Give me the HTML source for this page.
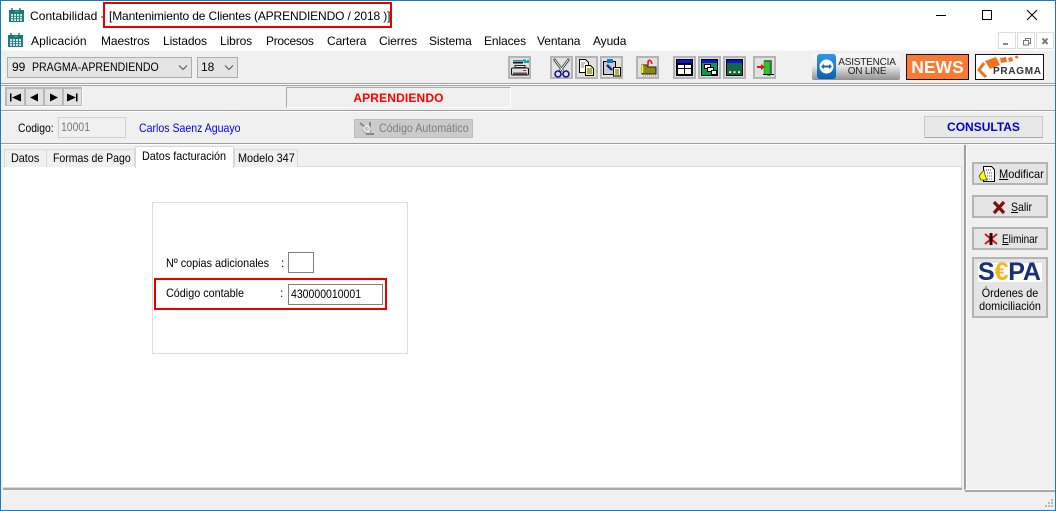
<!DOCTYPE html>
<html><head><meta charset="utf-8">
<style>
html,body{margin:0;padding:0;width:1056px;height:511px;overflow:hidden;background:#f0f0f0;}
body{position:relative;font-family:"Liberation Sans",sans-serif;font-size:12px;color:#000;}
.a,.t{position:absolute;}
.t{white-space:nowrap;line-height:14px;transform-origin:0 50%;}
.m{letter-spacing:-.1px;top:34px;}
.b{position:absolute;box-sizing:border-box;background:#e1e1e1;border:2px solid #b4b4b4;}
svg{position:absolute;overflow:visible;}
</style></head><body>
<!-- window -->
<div class="a" style="left:0;top:0;width:1056px;height:50px;background:#fff"></div>
<div class="a" style="left:0;top:0;width:1056px;height:1px;background:#1b7ac0"></div>
<div class="a" style="left:0;top:0;width:1px;height:511px;background:#1b7ac0"></div>
<div class="a" style="right:0;top:0;width:1px;height:511px;background:#1b7ac0"></div>
<div class="a" style="left:0;top:510px;width:1056px;height:1px;background:#1b7ac0"></div>

<!-- title -->
<svg style="left:9px;top:7px" width="16" height="16" viewBox="0 0 16 16"><rect x="0" y="4" width="15" height="11" fill="#1f7f80"/><rect x="0" y="3" width="15" height="3" fill="#178"/><path d="M3 1v4M11 1v4" stroke="#555" stroke-width="1.4"/><rect x="6" y="4" width="4" height="1" fill="#3c3"/><path d="M2 8h11M2 10.500h11M2 13h11" stroke="#fff" stroke-width="1.400" stroke-dasharray="2 1"/></svg>
<div class="t" style="left:30px;top:9px;letter-spacing:.05px">Contabilidad -</div>
<div class="t" style="left:109px;top:9px;letter-spacing:-.14px">[Mantenimiento de Clientes (APRENDIENDO / 2018 )]</div>
<div class="a" style="left:103px;top:2px;width:289px;height:26px;box-sizing:border-box;border:2px solid #e80000"></div>
<svg style="left:930px;top:5px" width="120" height="20"><path d="M6 10.500h10" stroke="#000"/><rect x="52.500" y="5.500" width="9" height="9" fill="none" stroke="#000"/><path d="M97 5l10 10M107 5l-10 10" stroke="#000" fill="none"/></svg>

<!-- menu -->
<svg style="left:8px;top:32px" width="16" height="16" viewBox="0 0 16 16"><rect x="0" y="4" width="15" height="11" fill="#1f7f80"/><rect x="0" y="3" width="15" height="3" fill="#178"/><path d="M3 1v4M11 1v4" stroke="#555" stroke-width="1.400"/><rect x="6" y="4" width="4" height="1" fill="#3c3"/><path d="M2 8h11M2 10.500h11M2 13h11" stroke="#fff" stroke-width="1.400" stroke-dasharray="2 1"/></svg>
<div class="t m" style="left:31px;letter-spacing:.1px">Aplicación</div>
<div class="t m" style="left:101px">Maestros</div>
<div class="t m" style="left:163px">Listados</div>
<div class="t m" style="left:220px">Libros</div>
<div class="t m" style="left:266px;letter-spacing:-.3px">Procesos</div>
<div class="t m" style="left:327px">Cartera</div>
<div class="t m" style="left:379px">Cierres</div>
<div class="t m" style="left:429px">Sistema</div>
<div class="t m" style="left:484px">Enlaces</div>
<div class="t m" style="left:537px">Ventana</div>
<div class="t m" style="left:593px">Ayuda</div>
<div class="a" style="left:998px;top:32px;width:18px;height:17px;box-sizing:border-box;border:1px solid #ddd;background:#fff"></div>
<div class="a" style="left:1017px;top:32px;width:18px;height:17px;box-sizing:border-box;border:1px solid #ddd;background:#fff"></div>
<div class="a" style="left:1036px;top:32px;width:18px;height:17px;box-sizing:border-box;border:1px solid #ddd;background:#fff"></div>
<svg style="left:998px;top:32px" width="56" height="17"><path d="M5 12h5" stroke="#888" stroke-width="2"/><path d="M27.500 8V6.500h5v5H31M25.500 8.500h5v4.500h-5z" fill="none" stroke="#777"/><path d="M44.500 6.500l5 5.500M49.500 6.500l-5 5.500" stroke="#777" stroke-width="2"/></svg>

<!-- toolbar bg -->
<div class="a" style="left:1px;top:50px;width:1054px;height:1px;background:#f7f7f7"></div>
<div class="a" style="left:7px;top:57px;width:185px;height:21px;box-sizing:border-box;background:#e4e4e4;border:1px solid #adadad"></div>
<div class="t" style="left:12px;top:60px">99</div>
<div class="t" style="left:32px;top:60px;transform:scaleX(.88)">PRAGMA-APRENDIENDO</div>
<div class="a" style="left:197px;top:57px;width:41px;height:21px;box-sizing:border-box;background:#e4e4e4;border:1px solid #adadad"></div>
<div class="t" style="left:201px;top:60px">18</div>
<svg style="left:178px;top:64px" width="60" height="8"><path d="M1 1.500l4 4 4-4M47 1.500l4 4 4-4" fill="none" stroke="#555"/></svg>

<!-- toolbar buttons -->
<div class="b" style="left:508px;top:56px;width:23px;height:23px"></div>
<svg style="left:510px;top:58px" width="20" height="20"><path d="M3 4h10" stroke="#111" stroke-width="3"/><path d="M3 3.500h10" stroke="#2cd" stroke-width="1"/><path d="M13 2.500h2v1.500h3v-2" stroke="#0aa" stroke-width="2" fill="none"/><rect x="5" y="7.500" width="10" height="2" fill="#eee" stroke="#222"/><rect x="1.500" y="10" width="17" height="7" rx="1" fill="#ddd" stroke="#111"/><path d="M3 15.500h14" stroke="#555" stroke-width="2"/><path d="M13 12.500h3" stroke="#d22"/></svg>
<div class="b" style="left:550px;top:56px;width:23px;height:23px"></div>
<svg style="left:551px;top:57px" width="21" height="21"><path d="M3 2l9 12M18 2L9 14" stroke="#222" stroke-width="2.400" fill="none"/><path d="M3.500 2.500l8.500 11.500M17.500 2.500L9 14" stroke="#fff" stroke-width="1"/><circle cx="7" cy="17" r="3" fill="none" stroke="#119" stroke-width="1.600"/><circle cx="15" cy="17" r="3" fill="none" stroke="#119" stroke-width="1.600"/></svg>
<div class="b" style="left:575px;top:56px;width:23px;height:23px"></div>
<svg style="left:577px;top:58px" width="19" height="19"><path d="M2.500 1.500h6l3 3v10h-9z" fill="#fff" stroke="#000"/><path d="M4 5h4M4 7h3M4 9h3" stroke="#888"/><path d="M8.500 7.500h5l3 3v7h-8z" fill="#ffffa0" stroke="#000"/><path d="M10 11h5M10 13h5M10 15h5" stroke="#555"/></svg>
<div class="b" style="left:600px;top:56px;width:23px;height:23px"></div>
<svg style="left:602px;top:58px" width="19" height="19"><path d="M1.500 3.500h12v13h-12z" fill="#ccc" stroke="#000"/><rect x="5" y="1" width="6" height="4" fill="#17c"/><path d="M5 7l5 5" stroke="#039" stroke-width="2.500"/><path d="M11.500 9.500h7v8.500h-7z" fill="#ffffa0" stroke="#000"/><path d="M13 12h4M13 14h4M13 16h4" stroke="#555"/></svg>
<div class="b" style="left:636px;top:56px;width:23px;height:23px"></div>
<svg style="left:638px;top:58px" width="19" height="19"><path d="M4 7h5l1 2h8v7H4z" fill="#8a8a10" stroke="#222"/><path d="M4.500 7v8" stroke="#ff0" stroke-width="1.500"/><path d="M10 8V4q1-3 3-1l1 3" fill="none" stroke="#e11" stroke-width="1.500"/><path d="M9 3l2-1v3z" fill="#e11"/><path d="M5 18h13" stroke="#999" stroke-dasharray="1 1"/></svg>
<div class="b" style="left:673px;top:56px;width:23px;height:23px"></div>
<svg style="left:675px;top:58px" width="19" height="19"><rect x="1" y="1" width="17" height="17" fill="#000"/><rect x="2" y="2" width="15" height="3" fill="#1111dd"/><path d="M3 7h6v3H3zM10 7h6v3h-6zM3 11h6v5H3zM10 11h6v5h-6z" fill="#fff"/></svg>
<div class="b" style="left:698px;top:56px;width:23px;height:23px"></div>
<svg style="left:700px;top:58px" width="19" height="19"><rect x="1" y="1" width="17" height="17" fill="#000"/><rect x="2" y="2" width="15" height="3" fill="#1111dd"/><rect x="2" y="5" width="15" height="12" fill="#109a50"/><rect x="4.500" y="6.500" width="6" height="4" fill="#fff" stroke="#000"/><rect x="7.500" y="9.500" width="6" height="4" fill="#fff" stroke="#000"/><rect x="11.500" y="12.500" width="5" height="4" fill="#fff" stroke="#000"/></svg>
<div class="b" style="left:723px;top:56px;width:23px;height:23px"></div>
<svg style="left:725px;top:58px" width="19" height="19"><rect x="1" y="1" width="17" height="17" fill="#000"/><rect x="2" y="2" width="15" height="3" fill="#1111dd"/><rect x="2" y="5" width="15" height="12" fill="#0d6b3c"/><path d="M4 14h2M8.500 14h2M13 14h2" stroke="#fff" stroke-width="2"/><path d="M4 13h1M9 13h1M13 13h1" stroke="#e33"/></svg>
<div class="b" style="left:753px;top:56px;width:23px;height:23px"></div>
<svg style="left:755px;top:58px" width="19" height="19"><path d="M9 2h8v14H9z" fill="#666"/><path d="M9 3l6 1v14l-6-2z" fill="#2c2" stroke="#161" stroke-width=".5"/><path d="M2 9h6" stroke="#e11" stroke-width="2"/><path d="M6 6l4 3-4 3z" fill="#e11"/><path d="M8 16.500h11" stroke="#000"/></svg>

<!-- teamviewer -->
<div class="a" style="left:812px;top:54px;width:88px;height:26px;border-radius:2px;background:linear-gradient(#f8f8f8 0,#ececec 45%,#8f8f8f 100%)"></div>
<div class="a" style="left:817px;top:54px;width:19px;height:25px;border-radius:3px;background:linear-gradient(#2a9ae8,#0c5fb0)"></div>
<svg style="left:818px;top:58px" width="17" height="17"><circle cx="8.500" cy="8.500" r="7" fill="#fff"/><path d="M3 8.500l3-2.500v1.500h5V6l3 2.500-3 2.500V9.500H6V11z" fill="#0e66b8"/></svg>
<div class="t" style="left:838px;top:58px;width:58px;text-align:center;font-size:10px;line-height:9px;letter-spacing:-.2px;color:#222">ASISTENCIA<br>ON LINE</div>
<!-- news -->
<div class="a" style="left:906px;top:54px;width:63px;height:26px;box-sizing:border-box;background:#fb7a30;border:1px solid #111"></div>
<div class="t" style="left:906px;top:59px;width:63px;text-align:center;font-size:17.500px;line-height:17px;font-weight:bold;color:#fff">NEWS</div>
<!-- pragma -->
<div class="a" style="left:975px;top:54px;width:69px;height:26px;box-sizing:border-box;background:#fff;border:1px solid #111"></div>
<svg style="left:976px;top:55px" width="44" height="24"><path d="M9 6l11-4 4 8-10 4zM24 3l6-1 1 5-6 1zM32 3l4-1 1 4-4 1zM39 1l3-.5.500 2.500-3 .5z" fill="#f37021"/><path d="M8 8L3 15l7 7" fill="none" stroke="#f37021" stroke-width="3"/></svg>
<div class="t" style="left:993px;top:67px;font-size:10px;line-height:10px;font-weight:bold;letter-spacing:.7px;color:#333">PRAGMA</div>

<!-- separator -->
<div class="a" style="left:1px;top:83px;width:1054px;height:1px;background:#a0a0a0"></div>
<div class="a" style="left:1px;top:84px;width:1054px;height:1px;background:#fff"></div>
<div class="a" style="left:1px;top:85px;width:1054px;height:1px;background:#a0a0a0"></div>

<!-- nav buttons -->
<div class="a" style="left:5px;top:87px;width:78px;height:20px;box-sizing:border-box;background:#b8b8b8;border-right:1px solid #fff;border-bottom:1px solid #fff"></div>
<div class="a" style="left:7px;top:89px;width:17px;height:16px;background:#e1e1e1"></div>
<div class="a" style="left:26px;top:89px;width:17px;height:16px;background:#e1e1e1"></div>
<div class="a" style="left:45px;top:89px;width:17px;height:16px;background:#e1e1e1"></div>
<div class="a" style="left:64px;top:89px;width:17px;height:16px;background:#e1e1e1"></div>
<svg style="left:0;top:90px" width="90" height="14"><path d="M10 3.500h1.500v8H10zM21 3.500v8l-9-4zM38 3.500v8l-8-4zM50 3.500v8l8-4zM67 3.500v8l9-4zM76 3.500h1.500v8H76z" fill="#000"/></svg>

<!-- aprendiendo box -->
<div class="a" style="left:286px;top:87px;width:225px;height:21px;box-sizing:border-box;border:1px solid #a8a8a8;border-right-color:#fff;border-bottom-color:#fff"></div>
<div class="t" style="left:286px;top:91px;width:225px;text-align:center;font-weight:bold;letter-spacing:.15px;color:#ff0000">APRENDIENDO</div>

<div class="a" style="left:1px;top:110px;width:1054px;height:1px;background:#a0a0a0"></div>
<div class="a" style="left:1px;top:111px;width:1054px;height:1px;background:#fff"></div>

<!-- codigo row -->
<div class="t" style="left:18px;top:121px;transform:scaleX(.86)">Codigo:</div>
<div class="a" style="left:58px;top:117px;width:68px;height:21px;box-sizing:border-box;background:#f0f0f0;border:1px solid #d0d0d0"></div>
<div class="t" style="left:61px;top:120px;color:#777;transform:scaleX(.87)">10001</div>
<div class="t" style="left:139px;top:121px;color:#0000f0;transform:scaleX(.88)">Carlos Saenz Aguayo</div>
<div class="a" style="left:354px;top:119px;width:119px;height:19px;box-sizing:border-box;background:#cbcbcb;border:1px solid #bcbcbc"></div>
<svg style="left:358px;top:120px" width="18" height="17"><path d="M2 3l6 5M12 2v10M5 9l4 5h7" stroke="#888" stroke-width="2" fill="none"/><circle cx="9" cy="9" r="3" fill="none" stroke="#eee" stroke-width="1.500"/></svg>
<div class="t" style="left:379px;top:121px;color:#7d7d7d;transform:scaleX(.89)">Código Automático</div>
<div class="a" style="left:924px;top:116px;width:119px;height:22px;box-sizing:border-box;background:#e8e8e8;border:1px solid #c8c8c8;border-bottom-color:#a8a8a8"></div>
<div class="t" style="left:924px;top:120px;width:119px;text-align:center;font-weight:bold;color:#0000d0">CONSULTAS</div>

<div class="a" style="left:1px;top:143px;width:1054px;height:1px;background:#a0a0a0"></div>
<div class="a" style="left:1px;top:144px;width:1054px;height:1px;background:#fff"></div>

<!-- main tab panel -->
<div class="a" style="left:3px;top:166px;width:959px;height:322px;background:#fff;border-top:1px solid #d9d9d9;border-right:1px solid #d9d9d9;border-bottom:1px solid #d9d9d9;box-sizing:border-box"></div>
<div class="a" style="left:3px;top:488px;width:959px;height:2px;background:#a8a8a8"></div>
<!-- tabs -->
<div class="a" style="left:4px;top:149px;width:43px;height:18px;box-sizing:border-box;background:#f0f0f0;border:1px solid #d9d9d9;border-bottom:0"></div>
<div class="a" style="left:46px;top:149px;width:89px;height:18px;box-sizing:border-box;background:#f0f0f0;border:1px solid #d9d9d9;border-bottom:0"></div>
<div class="a" style="left:234px;top:149px;width:64px;height:18px;box-sizing:border-box;background:#f0f0f0;border:1px solid #d9d9d9;border-bottom:0"></div>
<div class="a" style="left:135px;top:146px;width:99px;height:22px;box-sizing:border-box;background:#fff;border:1px solid #d9d9d9;border-bottom:0"></div>
<div class="t" style="left:11px;top:151px;transform:scaleX(.9)">Datos</div>
<div class="t" style="left:53px;top:151px;transform:scaleX(.876)">Formas de Pago</div>
<div class="t" style="left:142px;top:149px;transform:scaleX(.9)">Datos facturación</div>
<div class="t" style="left:238px;top:151px;transform:scaleX(.905)">Modelo 347</div>

<!-- form box -->
<div class="a" style="left:152px;top:202px;width:256px;height:152px;box-sizing:border-box;border:1px solid #dcdcdc;background:#fff"></div>
<div class="t" style="left:166px;top:256px;transform:scaleX(.9)">Nº copias adicionales</div>
<div class="t" style="left:281px;top:256px">:</div>
<div class="a" style="left:288px;top:252px;width:26px;height:21px;box-sizing:border-box;border:1px solid #808080"></div>
<div class="t" style="left:166px;top:286px;transform:scaleX(.9)">Código contable</div>
<div class="t" style="left:280px;top:286px">:</div>
<div class="a" style="left:288px;top:284px;width:95px;height:21px;box-sizing:border-box;border:1px solid #808080"></div>
<div class="t" style="left:291px;top:287px;transform:scaleX(.875)">430000010001</div>
<div class="a" style="left:154px;top:278px;width:233px;height:32px;box-sizing:border-box;border:2px solid #e80000"></div>

<!-- side panel -->
<div class="a" style="left:964px;top:145px;width:2px;height:345px;background:#a0a0a0"></div>
<div class="a" style="left:966px;top:145px;width:1px;height:345px;background:#fff"></div>
<div class="b" style="left:972px;top:162px;width:76px;height:23px;background:#e4e4e4"></div>
<svg style="left:979px;top:165px" width="18" height="18"><path d="M4.500 1.500h8l3 3v12h-11z" fill="#fff" stroke="#000"/><path d="M7 5h5M8 8h6M8 11h6M8 14h6" stroke="#555" stroke-dasharray="1 1"/><path d="M0 11l5-6 1 5 2 5H2z" fill="#ff0" stroke="#333" stroke-width=".7"/></svg>
<div class="t" style="left:999px;top:167px;transform:scaleX(.92)"><u>M</u>odificar</div>
<div class="b" style="left:972px;top:195px;width:76px;height:23px;background:#e4e4e4"></div>
<svg style="left:992px;top:200px" width="14" height="15"><path d="M2 2l10 11M12 2L2 13" stroke="#7a1010" stroke-width="3.200"/></svg>
<div class="t" style="left:1011px;top:200px;transform:scaleX(.875)"><u>S</u>alir</div>
<div class="b" style="left:972px;top:227px;width:76px;height:23px;background:#e4e4e4"></div>
<svg style="left:984px;top:232px" width="14" height="14"><path d="M1 2l12 10M13 2L1 12" stroke="#f00" stroke-width="1.800"/><path d="M7 1v12" stroke="#111" stroke-width="3"/></svg>
<div class="t" style="left:1002px;top:232px;transform:scaleX(.83)"><u>E</u>liminar</div>
<div class="b" style="left:972px;top:257px;width:76px;height:61px;background:#e4e4e4"></div>
<div class="a" style="left:978px;top:263px;width:64px;height:19px;background:#fff"></div>
<div class="t" style="left:978px;top:261px;font-size:25px;line-height:22px;font-weight:bold;color:#1a2f7a;letter-spacing:-.2px">S<span style="color:#f3b61c">€</span>PA</div>
<div class="t" style="left:972px;top:287px;width:76px;text-align:center;line-height:13px;transform-origin:50% 50%;transform:scaleX(.9)">Órdenes de<br>domiciliación</div>

<!-- status -->
<div class="a" style="left:965px;top:489px;width:90px;height:1px;background:#fff"></div>
<div class="a" style="left:965px;top:490px;width:90px;height:2px;background:#a8a8a8"></div>
<svg style="left:1044px;top:499px" width="10" height="10"><path d="M7 0h2v2H7zM4 3h2v2H4zM7 3h2v2H7zM1 6h2v2H1zM4 6h2v2H4zM7 6h2v2H7z" fill="#b8b8b8"/></svg>
</body></html>
